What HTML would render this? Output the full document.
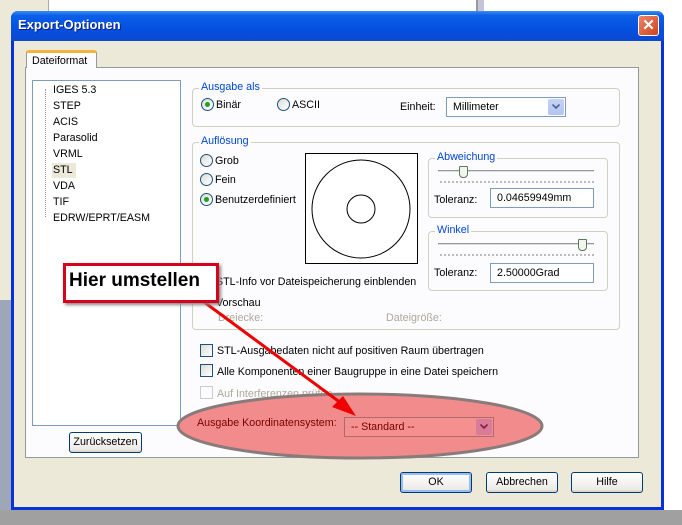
<!DOCTYPE html>
<html><head><meta charset="utf-8"><style>
*{box-sizing:border-box}
body{margin:0;width:682px;height:525px;overflow:hidden;position:relative;background:#fff;font-family:"Liberation Sans",sans-serif;font-size:10.7px;color:#000}
.a{position:absolute}
.t{position:absolute;white-space:nowrap}
.grp{position:absolute;border:1px solid #d0d0bf;border-radius:4px}
.gl{position:absolute;top:-8px;left:6px;background:#fcfcfe;color:#0046d5;padding:0 2px}
.rad{position:absolute;width:13px;height:13px;border:1px solid #1c5180;border-radius:50%;background:linear-gradient(135deg,#dcdcd5,#fff)}
.rad.on::after{content:"";position:absolute;left:3px;top:3px;width:5px;height:5px;border-radius:50%;background:#21a121}
.chk{position:absolute;width:13px;height:13px;border:1px solid #1c5180;background:linear-gradient(135deg,#dcdcd5,#fff)}
.btn{position:absolute;border:1px solid #003c74;border-radius:3px;background:linear-gradient(#fff,#ecebe6 85%,#d6d0c5);text-align:center}
.inp{position:absolute;background:#fff;border:1px solid #7f9db9;padding:3px 0 0 6px}
.dd{position:absolute;right:1px;top:1px;bottom:1px;width:16px;background:linear-gradient(#c6d3f7,#b1c4f2);border-radius:2px}
.dd svg{position:absolute;left:4px;top:5px}
.li{position:absolute;left:53px}
</style></head><body>
<div class="a" style="left:0;top:0;width:48px;height:525px;background:#9da7b8"></div>
<div class="a" style="left:0;top:0;width:48px;height:300px;background:#ece9d8"></div>
<div class="a" style="left:48px;top:0;width:315px;height:12px;background:#fff;border-left:1px solid #aaa"></div>
<div class="a" style="left:476px;top:0;width:8px;height:12px;background:#c5c5d8;border-left:2px solid #999"></div>
<div class="a" style="left:0;top:510px;width:682px;height:15px;background:#a0a0a0"></div>
<div class="a" style="left:663px;top:0;width:19px;height:510px;background:#fff"></div>
<div class="a" style="left:11px;top:11px;width:653px;height:499px;background:#0831d9;border-radius:7px 7px 0 0"></div>
<div class="a" style="left:11px;top:11px;width:653px;height:30px;border-radius:7px 7px 0 0;background:linear-gradient(#3c8cf3,#0a5fe8 15%,#0550e0 60%,#0a49d1)"></div>
<div class="t" style="left:18px;top:17px;color:#fff;font-weight:bold;font-size:13px;text-shadow:1px 1px #0a1e80">Export-Optionen</div>
<div class="a" style="left:638px;top:15px;width:21px;height:21px;border:1px solid #fff;border-radius:3px;background:linear-gradient(135deg,#e9866c,#d1431e);color:#fff;font-weight:bold;font-size:15px;text-align:center;line-height:19px">✕</div>
<div class="a" style="left:14px;top:41px;width:647px;height:466px;background:#ece9d8"></div>
<div class="a" style="left:25px;top:67px;width:614px;height:391px;background:#fcfcfe;border:1px solid #919b9c"></div>
<div class="a" style="left:26px;top:50px;width:71px;height:18px;background:#fcfcfe;border:1px solid #919b9c;border-bottom:none;border-top:3px solid #f3b33d;border-radius:3px 3px 0 0"></div>
<div class="t" style="left:32px;top:55px">Dateiformat</div>
<div class="a" style="left:32px;top:80px;width:149px;height:346px;background:#fff;border:1px solid #7f9db9"></div>
<div class="a" style="left:45px;top:89px;height:128px;border-left:1px dotted #999"></div>
<div class="li t" style="top:84px">IGES 5.3</div>
<div class="li t" style="top:100px">STEP</div>
<div class="li t" style="top:116px">ACIS</div>
<div class="li t" style="top:132px">Parasolid</div>
<div class="li t" style="top:148px">VRML</div>
<div class="a" style="left:52px;top:163px;width:24px;height:15px;background:#ece9d8"></div>
<div class="li t" style="top:164px">STL</div>
<div class="li t" style="top:180px">VDA</div>
<div class="li t" style="top:196px">TIF</div>
<div class="li t" style="top:212px">EDRW/EPRT/EASM</div>
<div class="btn" style="left:69px;top:432px;width:73px;height:21px;line-height:19px">Zurücksetzen</div>
<div class="grp" style="left:192px;top:88px;width:428px;height:39px"><span class="gl">Ausgabe als</span></div>
<div class="rad on" style="left:201px;top:98px"></div><div class="t" style="left:216px;top:99px">Binär</div>
<div class="rad" style="left:277px;top:98px"></div><div class="t" style="left:292px;top:99px">ASCII</div>
<div class="t" style="left:400px;top:101px">Einheit:</div>
<div class="inp" style="left:446px;top:97px;width:120px;height:20px">Millimeter<div class="dd"><svg width="8" height="6"><path d="M0.5 0.5 L4 4 L7.5 0.5" fill="none" stroke="#4d6185" stroke-width="1.6"/></svg></div></div>
<div class="grp" style="left:192px;top:142px;width:428px;height:188px"><span class="gl">Auflösung</span></div>
<div class="rad" style="left:200px;top:154px"></div><div class="t" style="left:215px;top:155px">Grob</div>
<div class="rad" style="left:200px;top:173px"></div><div class="t" style="left:215px;top:174px">Fein</div>
<div class="rad on" style="left:200px;top:193px"></div><div class="t" style="left:215px;top:194px">Benutzerdefiniert</div>
<svg class="a" style="left:305px;top:153px" width="113" height="111"><rect x="0.5" y="0.5" width="112" height="110" fill="#fff" stroke="#000"/><circle cx="56" cy="56" r="49" fill="none" stroke="#000"/><circle cx="56" cy="56" r="14" fill="none" stroke="#000"/></svg>
<div class="t" style="left:216px;top:276px">STL-Info vor Dateispeicherung einblenden</div>
<div class="t" style="left:216px;top:297px">Vorschau</div>
<div class="t" style="left:218px;top:312px;color:#aca899">Dreiecke:</div>
<div class="t" style="left:386px;top:312px;color:#aca899">Dateigröße:</div>
<div class="grp" style="left:428px;top:158px;width:180px;height:60px"><span class="gl">Abweichung</span></div>
<div class="a" style="left:438px;top:170px;width:156px;height:3px;border-top:1px solid #999;border-bottom:1px solid #fff;background:#ddd"></div>
<div class="a" style="left:459px;top:166px;width:9px;height:12px;background:#f4f4ef;border:1px solid #587b58;border-radius:1px 1px 4px 4px"></div>
<div class="a" style="left:440px;top:181px;width:154px;height:3px;border-top:2px dotted #bbb"></div>
<div class="t" style="left:434px;top:194px">Toleranz:</div>
<div class="inp" style="left:490px;top:188px;width:104px;height:20px">0.04659949mm</div>
<div class="grp" style="left:428px;top:231px;width:180px;height:60px"><span class="gl">Winkel</span></div>
<div class="a" style="left:438px;top:243px;width:156px;height:3px;border-top:1px solid #999;border-bottom:1px solid #fff;background:#ddd"></div>
<div class="a" style="left:578px;top:239px;width:9px;height:12px;background:#f4f4ef;border:1px solid #587b58;border-radius:1px 1px 4px 4px"></div>
<div class="a" style="left:440px;top:254px;width:154px;height:3px;border-top:2px dotted #bbb"></div>
<div class="t" style="left:434px;top:267px">Toleranz:</div>
<div class="inp" style="left:490px;top:263px;width:104px;height:20px">2.50000Grad</div>
<div class="chk" style="left:200px;top:344px"></div><div class="t" style="left:217px;top:345px">STL-Ausgabedaten nicht auf positiven Raum übertragen</div>
<div class="chk" style="left:200px;top:364px"></div><div class="t" style="left:217px;top:366px">Alle Komponenten einer Baugruppe in eine Datei speichern</div>
<div class="chk" style="left:200px;top:386px;border-color:#ccc;background:#fcfcfe"></div><div class="t" style="left:217px;top:388px;color:#aca899">Auf Interferenzen prüfen</div>
<svg class="a" style="left:175px;top:390px" width="372" height="72"><ellipse cx="185" cy="36" rx="182" ry="32" fill="#f28c8c" stroke="#8a7b7b" stroke-width="3"/></svg>
<div class="t" style="left:197px;top:417px;color:#7a0000">Ausgabe Koordinatensystem:</div>
<div class="inp" style="left:344px;top:417px;width:150px;height:20px;background:#f49090;border-color:#b06a6a;color:#7a0000">-- Standard --<div class="dd" style="background:#d87c99"><svg width="8" height="6"><path d="M0.5 0.5 L4 4 L7.5 0.5" fill="none" stroke="#7a2040" stroke-width="1.6"/></svg></div></div>
<div class="btn" style="left:400px;top:472px;width:72px;height:21px;line-height:19px;box-shadow:inset 0 0 0 2px #9bbcf0">OK</div>
<div class="btn" style="left:486px;top:472px;width:72px;height:21px;line-height:19px">Abbrechen</div>
<div class="btn" style="left:571px;top:472px;width:72px;height:21px;line-height:19px">Hilfe</div>
<svg class="a" style="left:0;top:0" width="682" height="525"><line x1="200" y1="299" x2="345" y2="406" stroke="#e00" stroke-width="3"/><polygon points="356,416 332,407 343,396" fill="#e00"/></svg>
<div class="a" style="left:63px;top:263px;width:156px;height:40px;background:#fff;border:3px solid #d8001c;box-shadow:2px 2px 3px #888"></div>
<div class="t" style="left:69px;top:270px;font-size:19px;font-weight:bold">Hier umstellen</div>
</body></html>
